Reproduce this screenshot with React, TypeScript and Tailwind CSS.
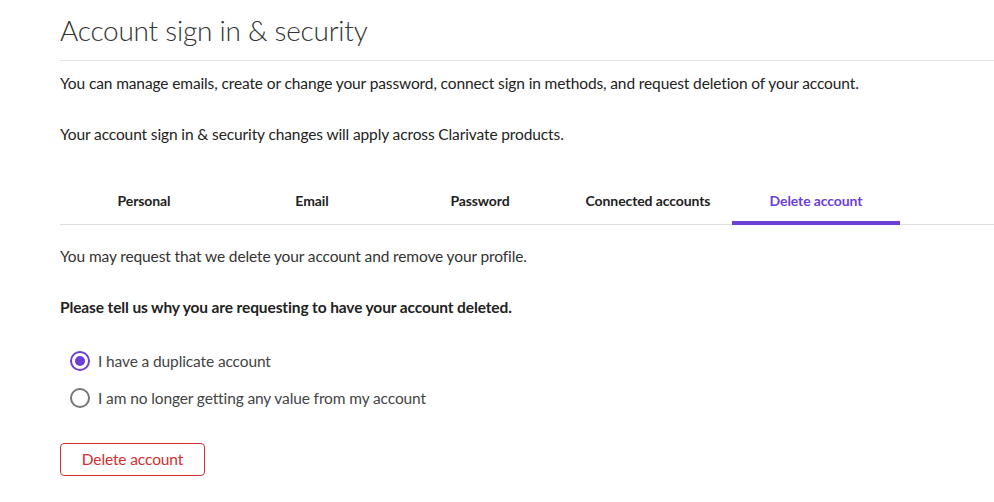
import React, { useState } from "react";

const tabs = ["Personal", "Email", "Password", "Connected accounts", "Delete account"];

const reasons = [
  "I have a duplicate account",
  "I am no longer getting any value from my account",
];

export default function App() {
  const [reason, setReason] = useState(0);

  return (
    <div className="min-h-[502px] bg-white pl-[60px] text-[#222] font-['Lato','Liberation_Sans',sans-serif]">
      <h1 className="pt-[12px] pb-[12px] text-[28px] leading-[36px] font-light tracking-[-0.25px] text-[#333]">
        Account sign in &amp; security
      </h1>
      <div className="h-px bg-[#e5e5e5]" />

      <p className="mt-[11px] text-[15.5px] leading-[22px] tracking-[-0.12px]">
        You can manage emails, create or change your password, connect sign in methods, and request deletion of your account.
      </p>
      <p className="mt-[29px] text-[15.5px] leading-[22px] tracking-[-0.12px]">
        Your account sign in &amp; security changes will apply across Clarivate products.
      </p>

      <div className="mt-[35px] flex border-b border-[#e0e0e0]">
        {tabs.map((t, i) => (
          <div
            key={t}
            className={
              "w-[168px] h-[45px] flex items-center justify-center text-[14px] font-bold tracking-[-0.1px] border-b-4 -mb-px " +
              (i === 4 ? "text-[#6c3fd6] border-[#6c3fd6]" : "text-[#222] border-transparent")
            }
          >
            {t}
          </div>
        ))}
      </div>

      <p className="mt-[20px] text-[15.5px] leading-[22px] tracking-[-0.12px] text-[#333]">
        You may request that we delete your account and remove your profile.
      </p>
      <p className="mt-[29px] text-[15.5px] leading-[22px] tracking-[-0.12px] font-bold">
        Please tell us why you are requesting to have your account deleted.
      </p>

      <div className="mt-[32px] flex flex-col gap-[15px]">
        {reasons.map((r, i) => (
          <label key={r} className="flex items-center gap-[8px] pl-[10px] cursor-pointer" onClick={() => setReason(i)}>
            <span
              className={
                "w-[20px] h-[20px] rounded-full border-2 flex items-center justify-center " +
                (reason === i ? "border-[#6c3fd6]" : "border-[#777]")
              }
            >
              {reason === i && <span className="w-[10px] h-[10px] rounded-full bg-[#6c3fd6]" />}
            </span>
            <span className="text-[15.5px] leading-[22px] tracking-[-0.12px] text-[#444]">{r}</span>
          </label>
        ))}
      </div>

      <button className="mt-[34px] w-[145px] h-[33px] rounded-[4px] border border-[#d32f2f] text-[15.5px] tracking-[-0.12px] text-[#d32f2f]">
        Delete account
      </button>
    </div>
  );
}
